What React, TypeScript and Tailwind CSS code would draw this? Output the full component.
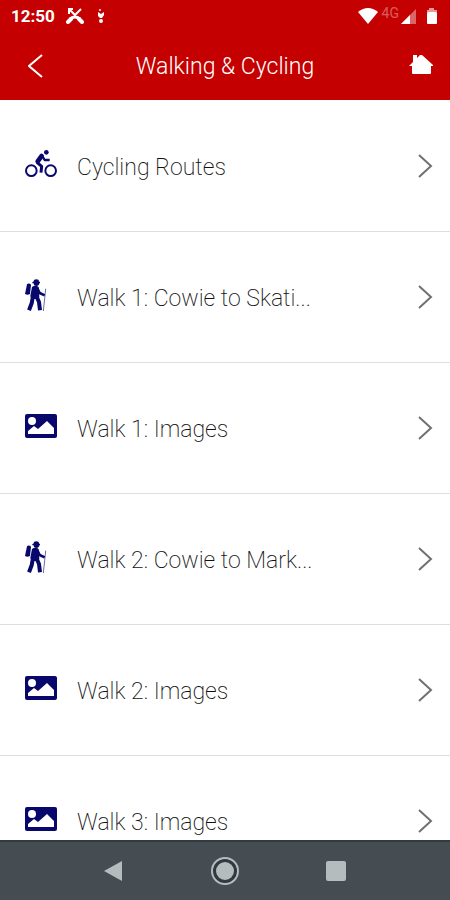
import React from "react";

type Kind = "bike" | "hiker" | "image";

const items: { kind: Kind; label: string }[] = [
  { kind: "bike", label: "Cycling Routes" },
  { kind: "hiker", label: "Walk 1: Cowie to Skati..." },
  { kind: "image", label: "Walk 1: Images" },
  { kind: "hiker", label: "Walk 2: Cowie to Mark..." },
  { kind: "image", label: "Walk 2: Images" },
  { kind: "image", label: "Walk 3: Images" },
];

function ItemIcon({ kind }: { kind: Kind }) {
  if (kind === "bike") {
    return (
      <svg viewBox="45 26 96 90" className="-mt-1 h-[30px] w-8" fill="none" stroke="currentColor" aria-hidden="true">
        <circle cx="64" cy="91" r="16" strokeWidth="6" />
        <circle cx="122" cy="91" r="16" strokeWidth="6" />
        <circle cx="109" cy="36" r="7" fill="currentColor" stroke="none" />
        <path d="M95 47 83 63" strokeWidth="14" strokeLinecap="round" />
        <path d="M81 66 95 78 93 97" strokeWidth="9" strokeLinejoin="round" />
        <path d="M96 46 104 59H119" strokeWidth="7" strokeLinejoin="round" />
      </svg>
    );
  }
  if (kind === "hiker") {
    return (
      <svg viewBox="45 39 66 99" className="-mt-1 h-[33px] w-[22px]" fill="none" stroke="currentColor" aria-hidden="true">
        <path d="M70 47Q71 40 79 40Q87 40 88 47L90 48V52H88Q87 60 79 60Q71 60 71 52H67V48Z" fill="currentColor" stroke="none" />
        <path d="M51 55Q54 51 60 53L63 56 60 84Q53 88 45 84Z" fill="currentColor" stroke="none" />
        <path d="M66 63Q76 56 86 63L88 94 78 99H65L61 90Z" fill="currentColor" stroke="none" />
        <path d="M82 67 89 81 104 88" strokeWidth="8" strokeLinejoin="round" />
        <path d="M69 90 65 112 57 133M79 90 87 108 90 133" strokeWidth="12" strokeLinejoin="round" />
        <path d="M107 68 104 98 100 135" strokeWidth="3" className="opacity-60" />
      </svg>
    );
  }
  return (
    <svg viewBox="0 0 32 24" className="-mt-1 h-6 w-8" aria-hidden="true">
      <rect width="32" height="24" rx="2" fill="currentColor" />
      <circle cx="7" cy="7" r="4" fill="white" />
      <path d="M3 20V17L9 12 13 15 22 7 29 14V20Z" fill="white" />
    </svg>
  );
}

export default function App() {
  return (
    <div className="flex h-screen flex-col overflow-hidden bg-white font-['Roboto','Liberation_Sans',sans-serif]">
      <header className="shrink-0 bg-[#c40000] text-white">
        <div className="flex h-8 items-center justify-between pr-3 pl-[11px]">
          <div className="flex items-center">
            <span className="text-[17px] leading-8 font-bold">12:50</span>
            <svg viewBox="0 0 20 16" className="ml-2.5 h-4 w-5" fill="none" stroke="currentColor" aria-hidden="true">
              <path d="M16 1 10 7 5 2M4 6V1H8" strokeWidth="2" />
              <path d="M3 14 6 11M17 14 14 11" strokeWidth="4" strokeLinecap="round" />
              <path d="M5 11Q10 7 15 11" strokeWidth="3" />
            </svg>
            <svg viewBox="0 0 8 16" className="ml-3 h-4 w-2" fill="currentColor" aria-hidden="true">
              <circle cx="3" cy="2" r="1" />
              <path d="M1 4 4 6 7 4V7L5 10H3L1 8Z" />
              <circle cx="4" cy="13" r="2" />
            </svg>
          </div>
          <div className="flex items-center">
            <svg viewBox="0 0 20 16" className="h-4 w-5" fill="currentColor" aria-hidden="true">
              <path d="M0 4Q10-4 20 4L10 16Z" />
            </svg>
            <span className="ml-1 pb-1.5 text-sm leading-4 opacity-35">4G</span>
            <svg viewBox="0 0 15 15" className="ml-0.5 h-[15px] w-[15px]" fill="currentColor" aria-hidden="true">
              <path d="M15 0V15H0Z" opacity="0.4" />
              <path d="M9 6V15H0Z" />
            </svg>
            <svg viewBox="0 0 12 16" className="ml-2.5 h-4 w-3" fill="currentColor" aria-hidden="true">
              <path d="M3 0H8V2H11V4H1V2H3Z" opacity="0.6" />
              <rect x="1" y="4" width="10" height="12" rx="1" />
            </svg>
          </div>
        </div>
        <div className="grid h-[68px] grid-cols-[72px_1fr_72px] items-center">
          <button type="button" aria-label="Back" className="flex h-full items-center pl-7">
            <svg viewBox="0 0 16 24" className="h-6 w-4" fill="none" stroke="currentColor" strokeWidth="2" aria-hidden="true">
              <path d="M14 1 1 12 14 23" />
            </svg>
          </button>
          <h1 className="pt-0.5 text-center text-[23px] leading-8 font-light">Walking &amp; Cycling</h1>
          <button type="button" aria-label="Home" className="flex h-full items-center justify-end pr-[17px]">
            <svg viewBox="0 0 24 21" className="-mt-1 h-[21px] w-6" fill="currentColor" aria-hidden="true">
              <path d="M0 12 4 8V1H8V4L11 1H13L24 11V12H22V19Q22 20 21 20H4Q3 20 3 19V12Z" />
            </svg>
          </button>
        </div>
      </header>
      <main className="min-h-0 flex-1 overflow-hidden pt-px">
        <ul>
          {items.map((item) => (
            <li key={item.label} className="border-b border-[#dedede]">
              <a href="#" className="flex h-[130px] items-center pr-[17px] pl-[25px]">
                <span className="w-[52px] shrink-0 text-[#08086c]">
                  <ItemIcon kind={item.kind} />
                </span>
                <span className="flex-1 truncate pt-1 text-[23px] leading-8 font-extralight text-[#111]">{item.label}</span>
                <svg viewBox="0 0 16 24" className="h-6 w-4" fill="none" stroke="#707070" strokeWidth="2" aria-hidden="true">
                  <path d="M2 1 14 12 2 23" />
                </svg>
              </a>
            </li>
          ))}
        </ul>
      </main>
      <nav className="flex h-[60px] shrink-0 justify-center gap-[86px] border-t-2 border-[#303b40] bg-[#454d52] text-[#b4bcbd]">
        <button type="button" aria-label="Back" className="flex items-center">
          <svg viewBox="0 0 20 20" className="h-5 w-5" fill="currentColor" aria-hidden="true">
            <path d="M18 0V20L0 10Z" />
          </svg>
        </button>
        <button type="button" aria-label="Home" className="flex items-center">
          <svg viewBox="0 0 30 30" className="h-[30px] w-[30px]" aria-hidden="true">
            <circle cx="15" cy="15" r="13" fill="#303b40" stroke="currentColor" strokeWidth="2" />
            <circle cx="15" cy="15" r="9" fill="currentColor" />
          </svg>
        </button>
        <button type="button" aria-label="Recent apps" className="flex items-center">
          <svg viewBox="0 0 20 20" className="h-5 w-5" aria-hidden="true">
            <rect width="20" height="20" rx="2" fill="currentColor" />
          </svg>
        </button>
      </nav>
    </div>
  );
}
